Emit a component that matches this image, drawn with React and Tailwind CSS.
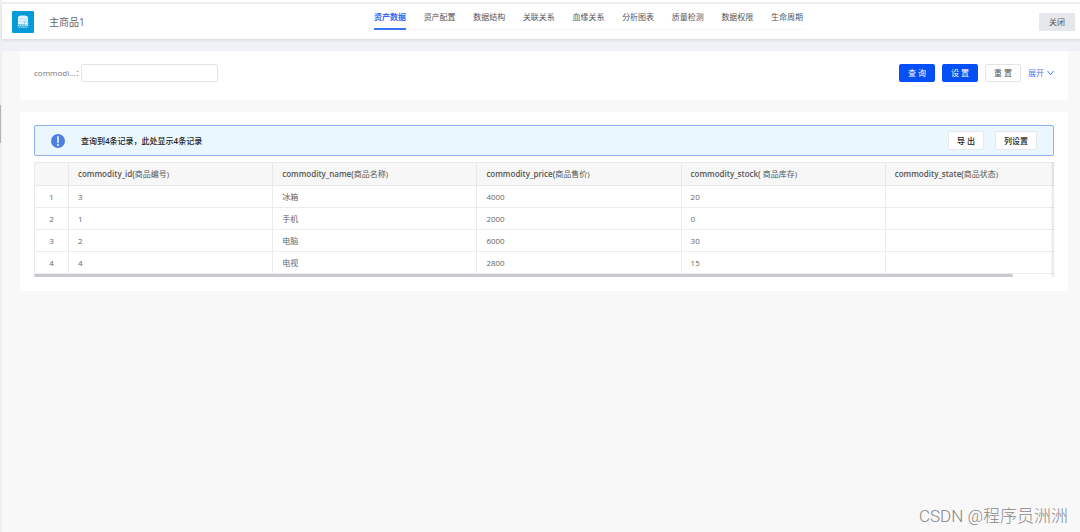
import React from 'react';

const tabs = ['资产数据', '资产配置', '数据结构', '关联关系', '血缘关系', '分析图表', '质量检测', '数据权限', '生命周期'];

const columns = [
  { key: 'id', name: 'commodity_id(', label: '商品编号)' },
  { key: 'name', name: 'commodity_name(', label: '商品名称)' },
  { key: 'price', name: 'commodity_price(', label: '商品售价)' },
  { key: 'stock', name: 'commodity_stock( ', label: '商品库存)' },
  { key: 'state', name: 'commodity_state(', label: '商品状态)' },
];

const rows = [
  { id: 3, name: '冰箱', price: 4000, stock: 20, state: '' },
  { id: 1, name: '手机', price: 2000, stock: 0, state: '' },
  { id: 2, name: '电脑', price: 6000, stock: 30, state: '' },
  { id: 4, name: '电视', price: 2800, stock: 15, state: '' },
];

function Logo() {
  return (
    <svg viewBox="0 0 22 22" className="h-[22px] w-[22px] shrink-0" aria-hidden="true">
      <rect width="22" height="22" rx="1" fill="#049bd8" />
      <path d="M6 6.400C6 4.900 8.200 4.500 11 4.500s5 .4 5 1.900v7H6z" fill="#e3f3fa" />
      <path d="M7 7.600c2 .7 6 .7 8 0M7 10.400c1.600.6 3.500.7 5 .5" stroke="#8fd0ec" strokeWidth=".6" fill="none" />
      <path d="M12.300 10.300l4.900 1.600-1.700 1 1.300 1.800-1.100.8-1.300-1.800-1.300 1z" fill="#fff" stroke="#049bd8" strokeWidth=".4" />
      <path d="M5.500 14.600h10.500M6.500 16.200h9" stroke="#b5dff2" strokeWidth="1.100" strokeDasharray="1.700 .6" />
    </svg>
  );
}

function Header() {
  return (
    <header className="relative flex h-[35px] items-stretch bg-white pr-[5px] pl-[10px] shadow-[0_1px_3px_rgba(0,0,0,0.12)]">
      <div className="flex w-[362px] shrink-0 items-center gap-[15px]">
        <Logo />
        <h1 className="text-[10px] leading-4 text-[#666]">主商品1</h1>
      </div>
      <nav className="mb-[9px] flex w-[429px] shrink-0 justify-between border-b border-[#f5f5f5]">
        {tabs.map((tab, idx) => (
          <a
            key={tab}
            href="#"
            className={
              idx === 0
                ? '-mb-px border-b-2 border-[#3b74f2] pt-[7px] font-bold text-[#2f6bf5]'
                : 'pt-[7px] text-[#555]'
            }
          >
            {tab}
          </a>
        ))}
      </nav>
      <button className="my-auto ml-auto h-[18px] w-9 rounded-[1px] bg-[#e6e7ea] text-[#555]">关闭</button>
    </header>
  );
}

function SearchBar() {
  return (
    <section className="flex h-[49px] items-start bg-white px-[14px] pt-[13px]">
      <label htmlFor="commodity" className="w-[47px] leading-[18px] text-[#777]">
        commodi...：
      </label>
      <input
        id="commodity"
        type="text"
        className="h-[18px] w-[137px] rounded-[2px] border border-[#e4e4e4] px-1 outline-none"
      />
      <div className="ml-auto flex items-center gap-[7px]">
        <button className="h-[18px] w-9 rounded-[2px] bg-[#0450f5] text-white">查 询</button>
        <button className="h-[18px] w-9 rounded-[2px] bg-[#0450f5] text-white">设 置</button>
        <button className="h-[18px] w-9 rounded-[2px] border border-[#e4e4e4] text-[#555]">重 置</button>
        <button className="flex items-center gap-[3px] text-[#4a7ef0]">
          展开
          <svg viewBox="0 0 7 6" className="h-[6px] w-[7px]" aria-hidden="true">
            <path d="M.6 1l2.900 3.800L6.400 1" fill="none" stroke="currentColor" strokeWidth="1" />
          </svg>
        </button>
      </div>
    </section>
  );
}

function ResultNotice() {
  return (
    <div className="flex h-[31px] items-center rounded-[2px] border border-[#8fb0ef] bg-[#ebf7ff] pr-4 pl-4 text-[#222]">
      <svg viewBox="0 0 14 14" className="mr-4 h-[14px] w-[14px]" aria-hidden="true">
        <circle cx="7" cy="7" r="7" fill="#4d80e4" />
        <path d="M7 2.800v5.600" stroke="#fff" strokeWidth="1.500" strokeLinecap="round" />
        <circle cx="7" cy="10.900" r="1" fill="#fff" />
      </svg>
      <p className="font-medium">
        查询到<b className="font-semibold">{rows.length}</b>条记录，此处显示<b className="font-semibold">{rows.length}</b>条记录
      </p>
      <div className="ml-auto flex gap-[11px] font-medium">
        <button className="h-[19px] w-9 rounded-[2px] border border-[#e8e8e8] bg-white">导 出</button>
        <button className="h-[19px] w-[42px] rounded-[2px] border border-[#e8e8e8] bg-white">列设置</button>
      </div>
    </div>
  );
}

function ResultTable() {
  return (
    <div className="relative mt-[6px] overflow-hidden">
      {/* one column is partly scrolled out on the right */}
      <table className="w-[calc(100%+36px)] table-fixed border-separate border-spacing-0 border-t border-l border-[#e8eaef] text-left">
        <thead>
          <tr className="h-[23px] bg-[#f7f7f7] text-[#555]">
            <th className="w-[34px] border-r border-b border-[#e6e8ee]"></th>
            {columns.map((col) => (
              <th key={col.key} className="border-r border-b border-[#e6e8ee] pl-[9px] font-semibold">
                {col.name}
                <span className="font-normal">{col.label}</span>
              </th>
            ))}
          </tr>
        </thead>
        <tbody>
          {rows.map((row, idx) => (
            <tr key={row.id} className="h-[22px] text-[#666]">
              <td className="border-r border-b border-[#eaecf0] text-center">{idx + 1}</td>
              {columns.map((col) => (
                <td key={col.key} className="border-r border-b border-[#eaecf0] pl-[9px]">
                  {row[col.key]}
                </td>
              ))}
            </tr>
          ))}
        </tbody>
      </table>
      <div className="h-[3px]">
        <div className="h-full w-[96%] rounded-full bg-[#c8cad0]"></div>
      </div>
      <div className="absolute inset-y-0 right-0 w-[3px] bg-linear-to-r from-black/3 to-black/10"></div>
    </div>
  );
}

export default function App() {
  return (
    <div className="relative flex min-h-screen border-l-2 border-[#f0f0f0] bg-[#f8f8f8] font-['Open_Sans','Noto_Sans_CJK_SC',sans-serif] text-[8px] leading-3">
      <div className="absolute top-[105px] -left-[2px] h-[38px] w-px bg-[#b5b5b5]"></div>
      <div className="min-w-0 flex-1">
        <div className="h-1 border-b-2 border-[#f0f0f0] bg-white"></div>
        <Header />
        <div className="h-3 bg-[#eff1f6]"></div>
        <main className="flex flex-col gap-3 pr-3 pl-[18px]">
          <SearchBar />
          <section className="bg-white px-[14px] pt-[13px] pb-[14px]">
            <ResultNotice />
            <ResultTable />
          </section>
        </main>
      </div>
      <div className="absolute right-3 bottom-1 font-['Roboto','Noto_Sans_CJK_SC',sans-serif] text-[17px] font-light leading-6 text-[#888]">
        CSDN @程序员洲洲
      </div>
    </div>
  );
}
